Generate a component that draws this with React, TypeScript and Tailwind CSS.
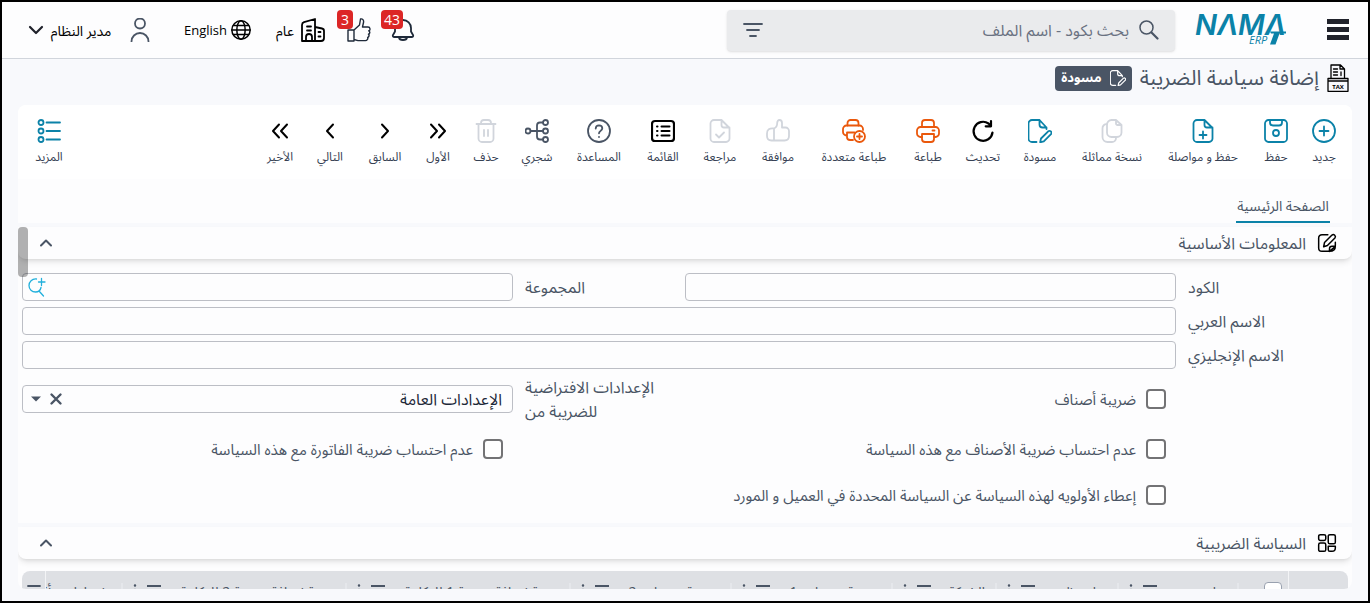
import type { ReactNode } from "react";

const stroke = {
  fill: "none",
  stroke: "currentColor",
  strokeWidth: 1.8,
  strokeLinecap: "round",
  strokeLinejoin: "round",
} as const;

type IconProps = { children: ReactNode; className?: string; box?: string };

function Icon({ children, className = "size-6", box = "0 0 24 24" }: IconProps) {
  return (
    <svg viewBox={box} className={`shrink-0 ${className}`} aria-hidden="true" {...stroke}>
      {children}
    </svg>
  );
}

const icons = {
  add: (
    <>
      <circle cx="12" cy="12" r="11" />
      <path d="M12 7.5v9M7.5 12h9" />
    </>
  ),
  save: (
    <>
      <rect x="1" y="1" width="22" height="22" rx="3.5" />
      <path d="M6 1v2.5A3 3 0 0 0 9 6.500h6a3 3 0 0 0 3-3V1" />
      <circle cx="12" cy="14" r="3" />
    </>
  ),
  saveNew: (
    <>
      <path d="M13.500 1H6a3.500 3.500 0 0 0-3.500 3.500v15A3.500 3.500 0 0 0 6 23h12a3.500 3.500 0 0 0 3.500-3.500V9zM13.500 1v5A2.500 2.500 0 0 0 16 8.500h5.500" />
      <path d="M12 12.500v7M8.500 16h7" />
    </>
  ),
  copy: (
    <>
      <path d="M16 1h-4.500A4.500 4.500 0 0 0 7 5.500v8a4.500 4.500 0 0 0 4.500 4.500H17a4.500 4.500 0 0 0 4.500-4.500V6zM16 1v3.500A1.500 1.500 0 0 0 17.500 6h4" />
      <path d="M7 5.200A4 4 0 0 0 2.500 9.500V18A5 5 0 0 0 7.500 23H12a4 4 0 0 0 4-4" />
    </>
  ),
  draft: (
    <>
      <path d="M8.500 23H4a3.500 3.500 0 0 1-3.500-3.500v-15A3.500 3.500 0 0 1 4 1h7.500l7 7.500V10M11.500 1v4.500A3 3 0 0 0 14.500 8.500h4" />
      <path d="M13 19.500l7.200-7.200a2 2 0 0 1 2.800 2.800L15.800 22.300l-3.600 1z" />
    </>
  ),
  refresh: (
    <path strokeWidth="2.200" d="M21.500 13.500A9.500 9.500 0 1 1 17.500 4.500L20 7M20 2v5.300h-5.300" />
  ),
  print: (
    <>
      <path d="M6 8V4a3 3 0 0 1 3-3h6a3 3 0 0 1 3 3v4" />
      <path d="M6 18H4.500A3.500 3.500 0 0 1 1 14.500v-3A3.500 3.500 0 0 1 4.500 8h15a3.500 3.500 0 0 1 3.500 3.500v3a3.500 3.500 0 0 1-3.500 3.500H18M16.500 11.500h2" />
      <path d="M6 15h12v5a3 3 0 0 1-3 3H9a3 3 0 0 1-3-3z" />
    </>
  ),
  printMany: (
    <>
      <path d="M5.500 6.500V4a3 3 0 0 1 3-3h5a3 3 0 0 1 3 3v2.500" />
      <path d="M4.500 16.500A3.500 3.500 0 0 1 1 13v-3a3.500 3.500 0 0 1 3.500-3.500h13a3.500 3.500 0 0 1 3.500 3.500v1M11 21H8a3 3 0 0 1-3-3v-4.500h7.500" />
      <circle cx="17.500" cy="17.500" r="5.500" />
      <path d="M17.500 15v5M15 17.500h5" />
    </>
  ),
  approve: (
    <path d="M8 10v11.500M1 14.500C1 10.500 3.500 9 8 9.500c3-1.200 3.200-3.500 3.200-5.500 0-2 1-3 2.200-3 1.600 0 2.600 1.200 2.600 3v4.500h3.500A3.500 3.500 0 0 1 23 12v5c0 3-1.500 4.500-4.500 4.500H5.500C2.500 21.500 1 20 1 17z" />
  ),
  review: (
    <>
      <path d="M13.500 1H6a3.500 3.500 0 0 0-3.500 3.500v15A3.500 3.500 0 0 0 6 23h12a3.500 3.500 0 0 0 3.500-3.500V9zM13.500 1v5A2.500 2.500 0 0 0 16 8.500h5.500" />
      <path d="M8 15.500l3 3 5-5" />
    </>
  ),
  list: (
    <>
      <rect x="1" y="2" width="22" height="20" rx="3" strokeWidth="2.200" />
      <path strokeWidth="2" d="M10.500 7.500h8M10.500 12h8M10.500 16.500h8M6 7.500h.5M6 12h.5M6 16.500h.5" />
    </>
  ),
  help: (
    <>
      <circle cx="12" cy="12" r="11" />
      <path d="M8.700 9.500A3.400 3.400 0 0 1 12 6.300c1.900 0 3.300 1.200 3.300 3 0 2.500-3.300 2.600-3.300 5M12 17.800v.2" />
    </>
  ),
  tree: (
    <>
      <circle cx="3" cy="12" r="2.500" />
      <circle cx="20.500" cy="3.500" r="2.500" />
      <circle cx="20.500" cy="12" r="2.500" />
      <circle cx="20.500" cy="20.500" r="2.500" />
      <path d="M5.500 12H18M18 3.500h-3A3 3 0 0 0 12 6.500v11a3 3 0 0 0 3 3h3" />
    </>
  ),
  trash: (
    <path d="M2.500 5h19M7 5V4a3 3 0 0 1 3-3h4a3 3 0 0 1 3 3v1M4.500 5v14.500A3.500 3.500 0 0 0 8 23h8a3.500 3.500 0 0 0 3.500-3.500V5M10 11v6M14 11v6" />
  ),
  first: <path strokeWidth="2" d="M5 5.500l6 6.500-6 6.500M13 5.500l6 6.500-6 6.500" />,
  previous: <path strokeWidth="2" d="M9 5.500l6 6.500-6 6.500" />,
  next: <path strokeWidth="2" d="M15 5.500L9 12l6 6.500" />,
  last: <path strokeWidth="2" d="M11 5.500L5 12l6 6.500M19 5.500L13 12l6 6.500" />,
  more: (
    <>
      <circle cx="4" cy="3.500" r="2.500" />
      <circle cx="4" cy="12" r="2.500" />
      <circle cx="4" cy="20.500" r="2.500" />
      <path d="M9.500 3.500H23M9.500 12H23M9.500 20.500H23" />
    </>
  ),
};

type Tool = { label: string; icon: ReactNode; width: string; color: string };

const tools: Tool[] = [
  { label: "جديد", icon: icons.add, width: "w-6", color: "text-[#0b82a8]" },
  { label: "حفظ", icon: icons.save, width: "w-6", color: "text-[#0b82a8]" },
  { label: "حفظ و مواصلة", icon: icons.saveNew, width: "w-[74px]", color: "text-[#0b82a8]" },
  { label: "نسخة مماثلة", icon: icons.copy, width: "w-[60px]", color: "text-gray-300" },
  { label: "مسودة", icon: icons.draft, width: "w-9", color: "text-[#0b82a8]" },
  { label: "تحديث", icon: icons.refresh, width: "w-[30px]", color: "text-black" },
  { label: "طباعة", icon: icons.print, width: "w-8", color: "text-[#ea580c]" },
  { label: "طباعة متعددة", icon: icons.printMany, width: "w-[68px]", color: "text-[#ea580c]" },
  { label: "موافقة", icon: icons.approve, width: "w-9", color: "text-gray-300" },
  { label: "مراجعة", icon: icons.review, width: "w-8", color: "text-gray-300" },
  { label: "القائمة", icon: icons.list, width: "w-[34px]", color: "text-black" },
  { label: "المساعدة", icon: icons.help, width: "w-[46px]", color: "text-gray-600" },
  { label: "شجري", icon: icons.tree, width: "w-[30px]", color: "text-gray-600" },
  { label: "حذف", icon: icons.trash, width: "w-6", color: "text-gray-300" },
  { label: "الأول", icon: icons.first, width: "w-6", color: "text-black" },
  { label: "السابق", icon: icons.previous, width: "w-[34px]", color: "text-black" },
  { label: "التالي", icon: icons.next, width: "w-7", color: "text-black" },
  { label: "الأخير", icon: icons.last, width: "w-6", color: "text-black" },
];

function ToolButton({ label, icon, width, color }: Tool) {
  return (
    <button type="button" className={`flex shrink-0 flex-col items-center gap-0.5 ${width}`}>
      <Icon className={`size-6 ${color}`}>{icon}</Icon>
      <span className="text-[12px] leading-6 whitespace-nowrap text-gray-700">{label}</span>
    </button>
  );
}

function Logo() {
  return (
    <svg viewBox="0 0 94 36" className="h-9 w-[94px] shrink-0 overflow-visible text-[#0b82a8]" fill="currentColor" role="img" aria-label="NAMA ERP">
      <text x="0" y="25" direction="ltr" fontFamily="Inter, sans-serif" fontStyle="italic" fontWeight="600" fontSize="29">
        NΛMΛ
      </text>
      <path d="M75 21.500h16v2H76zM79 23.500h5.500L80.500 34.500H75z" />
      <text x="54" y="34" direction="ltr" fontFamily="'Open Sans', sans-serif" fontStyle="italic" fontSize="11">
        ERP
      </text>
    </svg>
  );
}

function Header() {
  return (
    <header className="flex h-[57px] shrink-0 items-center border-b border-gray-300 bg-[#fdfdfe] pr-[19px] pl-[26px]">
      <button type="button" aria-label="القائمة الرئيسية" className="flex w-[22px] flex-col gap-[3px] pb-0.5">
        <span className="h-[5px] bg-[#20222b]" />
        <span className="h-[5px] bg-[#20222b]" />
        <span className="h-[5px] bg-[#20222b]" />
      </button>
      <a href="#home" className="mr-[38px] pb-1">
        <Logo />
      </a>
      <div className="mr-5 flex h-[41px] w-[448px] items-center rounded bg-[#eaebed] px-4 shadow-sm">
        <label htmlFor="search" className="text-gray-600">
          <Icon className="size-5" box="0 0 20 20">
            <circle cx="7.500" cy="7.500" r="6.500" strokeWidth="1.500" />
            <path d="M12.500 12.500L18.500 18.500" strokeWidth="2.200" />
          </Icon>
        </label>
        <input
          id="search"
          aria-label="بحث"
          placeholder="بحث بكود - اسم الملف"
          className="mr-2.5 h-8 min-w-0 flex-1 bg-transparent text-[16px] outline-none placeholder:text-gray-500"
        />
        <button type="button" aria-label="تصفية" className="text-gray-600">
          <Icon className="size-5" box="0 0 20 20">
            <path d="M1 4h18M4 10h12M7 16h6" />
          </Icon>
        </button>
      </div>
      <div className="flex-1" />
      <div className="flex items-center text-[14px] text-black">
        <button type="button" aria-label="الإشعارات" className="relative text-gray-800">
          <Icon className="size-6">
            <path d="M12 2a8 8 0 0 0-8 8v3.500L2 17c-.6 1.300 0 2 1.500 2h17c1.500 0 2.100-.7 1.500-2l-2-3.500V10a8 8 0 0 0-8-8zM8 19.500c.5 3.300 7.500 3.300 8 0" />
          </Icon>
          <span className="absolute -top-2 right-3 rounded bg-[#dc2626] px-[3px] text-[14px] leading-[19px] text-white">43</span>
        </button>
        <button type="button" aria-label="الموافقات" className="relative mr-5 text-gray-800">
          <Icon className="size-6">
            <path strokeWidth="1.400" d="M1 12h6v11H1zM7 12l5.500-5L13.500 1c2-.5 3.500 1 3 3.500L15.500 9H21c2.500 0 2.500 3.500.8 3.800 1.500.8 1.200 3-.3 3.400 1 .9.500 2.800-.8 3.200.5 1.800-.8 3.200-2.200 3.200H11L7 21.500" />
          </Icon>
          <span className="absolute -top-2 right-[18px] rounded bg-[#dc2626] px-1 text-[14px] leading-[19px] text-white">3</span>
        </button>
        <button type="button" className="mr-[22px] flex items-center gap-1.5">
          <Icon className="size-6">
            <path d="M1 23V7a3 3 0 0 1 2-2.800L14 1v22zM14 9l7 1.500a2.500 2.500 0 0 1 2 2.500v7a3 3 0 0 1-3 3h-6M5 23v-4a3 3 0 0 1 6 0v4M6 8.500h4M6 12.500h4M17.500 14h2M17.500 18.500h2" />
          </Icon>
          <span className="w-5 whitespace-nowrap">عام</span>
        </button>
        <button type="button" className="mr-6 flex items-center gap-1">
          <Icon className="size-5">
            <circle cx="12" cy="12" r="11" />
            <ellipse cx="12" cy="12" rx="5" ry="11" />
            <path d="M1 12h22M3 6.500h18M3 17.500h18" />
          </Icon>
          <span className="text-[13px] leading-6">English</span>
        </button>
        <button type="button" className="mr-8 flex items-center">
          <Icon className="size-6 text-gray-600">
            <circle cx="12" cy="5.500" r="5" />
            <path d="M3.500 23.500a8.500 8.500 0 0 1 17 0" />
          </Icon>
          <span className="mr-3.5 w-[66px] whitespace-nowrap">مدير النظام</span>
          <Icon className="mr-1 size-4 text-[#20222b]" box="0 0 16 16">
            <path strokeWidth="2.200" d="M2 5l6 6 6-6" />
          </Icon>
        </button>
      </div>
    </header>
  );
}

function SectionHeader({ title, children }: { title: string; children: ReactNode }) {
  return (
    <h2 className="border-t-4 border-[#f8f9fc]">
      <button type="button" className="flex h-8 w-full items-center rounded-b-lg bg-[#fdfdfe] pr-[15px] pl-5 text-gray-600 shadow-md">
        <Icon className="size-5 text-black">{children}</Icon>
        <span className="mr-[11px] text-[16px]">{title}</span>
        <Icon className="mr-auto size-4" box="0 0 16 16">
          <path strokeWidth="2" d="M3 10.500l5-5 5 5" />
        </Icon>
      </button>
    </h2>
  );
}

const inputClass = "h-7 w-full rounded border border-[#bcbec5] bg-transparent px-2.5 text-[16px] text-gray-800 outline-none";

function Field({ id, label, children, wide = false }: { id: string; label: string; children: ReactNode; wide?: boolean }) {
  return (
    <div className={wide ? "col-span-2 flex items-center" : "flex items-center"}>
      <label htmlFor={id} className="w-[172px] shrink-0 pr-4 pl-3 text-left text-[16px] leading-6 text-gray-600">
        {label}
      </label>
      <div className="relative min-w-0 flex-1">{children}</div>
    </div>
  );
}

function Check({ id, label }: { id: string; label: string }) {
  return (
    <div className="flex items-center gap-2.5 pr-[182px]">
      <input id={id} type="checkbox" className="size-5 shrink-0 appearance-none rounded border-2 border-[#737375] bg-white" />
      <label htmlFor={id} className="text-[15px] whitespace-nowrap text-gray-600">{label}</label>
    </div>
  );
}

const columns = [
  { title: "تطبق من", width: "w-[120px]" },
  { title: "تطبق إلى", width: "w-[122px]" },
  { title: "الشركة", width: "w-[104px]" },
  { title: "ضريبة مبيعات 1", width: "w-[161px]" },
  { title: "ضريبة مبيعات 2", width: "w-[161px]" },
  { title: "نسبة إضافة ضريبة 1 للتكلفة", width: "w-[224px]" },
  { title: "نسبة إضافة ضريبة 2 للتكلفة", width: "w-[224px]" },
];

function PolicyTable() {
  return (
    <table className="w-full table-fixed border-separate border-spacing-0 overflow-hidden rounded-t-lg bg-[#dee0e4] text-[14px] text-gray-600">
      <thead>
        <tr className="h-10">
          <th className="w-[60px] border-l border-gray-100" />
          <th className="w-[49px] pr-1.5 text-right">
            <input type="checkbox" aria-label="تحديد الكل" className="block size-[18px] appearance-none rounded border border-gray-400 bg-white" />
          </th>
          {columns.map((column) => (
            <th key={column.title} className={`p-0 font-normal ${column.width}`}>
              <div className="flex items-center gap-2.5 pl-2.5">
                <span className="h-4 w-0.5 shrink-0 bg-gray-200" />
                <span className="min-w-0 flex-1 text-right whitespace-nowrap">{column.title}</span>
                <Icon className="size-3.5" box="0 0 14 14">
                  <path d="M0 2h14M3 6h8M5 10h4" />
                </Icon>
                <Icon className="h-3.5 w-1" box="0 0 4 14">
                  <path strokeWidth="2.500" d="M2 1.500v.1M2 6v.1M2 10.500v.1" />
                </Icon>
              </div>
            </th>
          ))}
          <th className="w-[78px] overflow-hidden border-l border-gray-100 p-0 font-normal whitespace-nowrap">
            <div className="flex items-center">
              <span className="h-4 w-0.5 shrink-0 bg-gray-200" />
              <span className="mr-4">إعدادات تأثير</span>
            </div>
          </th>
          <th className="p-0">
            <Icon className="mr-1 size-3.5" box="0 0 14 14">
              <path d="M1 2h12M1 6h12M1 10h12" />
            </Icon>
          </th>
        </tr>
      </thead>
    </table>
  );
}

export default function App() {
  return (
    <div
      dir="rtl"
      lang="ar"
      className="flex h-screen flex-col overflow-hidden border-2 border-black bg-[#f8f9fc] font-['Open_Sans','Noto_Sans_Arabic','DejaVu_Sans',sans-serif]"
    >
      <Header />
      <main className="flex min-h-0 flex-1 flex-col px-4 pb-3">
        <div className="flex h-[46px] shrink-0 items-center px-[3px] pb-2">
          <Icon className="h-7 w-[22px] text-black" box="0 0 22 28">
            <path strokeWidth="1.300" d="M1 17h20v10.300H1zM1 17v-2.500h3M21 17v-2.500h-3M4 14.500V1h9.500L17.500 5v9.500M13 1v4h4.500M4 14.500h13.500M6.500 5h4M6.500 8h4M6.500 11h4M14 8v3.500" />
            <text x="11" y="24.500" textAnchor="middle" fill="currentColor" stroke="none" fontSize="6" fontWeight="700" direction="ltr">TAX</text>
          </Icon>
          <h1 className="mr-2 text-[21px] whitespace-nowrap text-gray-600">إضافة سياسة الضريبة</h1>
          <span className="mr-2 flex h-[25px] items-center gap-2 rounded bg-gray-600 px-1.5 text-[13px] font-bold text-white">
            <Icon className="size-4">{icons.draft}</Icon>
            مسودة
          </span>
        </div>
        <div className="relative flex min-h-0 flex-1 flex-col overflow-hidden rounded-lg bg-[#fdfdfe]">
          <div className="flex h-[74px] shrink-0 items-start gap-6 bg-white pt-3.5 pr-4 pl-4">
            {tools.map((tool) => (
              <ToolButton key={tool.label} {...tool} />
            ))}
            <div className="flex-1" />
            <ToolButton label="المزيد" icon={icons.more} width="w-[30px]" color="text-[#0b82a8]" />
          </div>
          <nav className="flex h-11 shrink-0 items-end pr-[22px]">
            <a href="#main" className="flex h-8 w-[94px] justify-center border-b-2 border-[#0b82a8] text-[14px] leading-[30px] whitespace-nowrap text-gray-600">
              الصفحة الرئيسية
            </a>
          </nav>
          <div className="relative min-h-0 flex-1 overflow-hidden">
            <SectionHeader title="المعلومات الأساسية">
              <path d="M13 2H6a4 4 0 0 0-4 4v12a4 4 0 0 0 4 4h8M22 11v4M8 16.500l1-5L18 2.500a2.500 2.500 0 0 1 3.500 3.500l-9 9zM15 22v-3a3 3 0 0 1 3-3h4zM15 22c4 0 7-2 7-6" />
            </SectionHeader>
            <form className="grid grid-cols-2 gap-y-1.5 px-1 pt-3.5 pb-2">
              <Field id="code" label="الكود">
                <input id="code" className={inputClass} />
              </Field>
              <Field id="group" label="المجموعة">
                <input id="group" className={inputClass} />
                <button type="button" aria-label="بحث عن مجموعة" className="absolute top-1 left-1.5 text-[#22b0dc]">
                  <Icon className="size-5" box="0 0 20 20">
                    <path strokeWidth="1.300" d="M8.500 2C4 1.500 1 5 1 8.500c0 4 3 6.500 6.500 6.500 3 0 5-2 5.500-4.500M11 14l4.500 5M13.500 1.500v7M10.500 5h6.500" />
                  </Icon>
                </button>
              </Field>
              <Field id="name-ar" label="الاسم العربي" wide>
                <input id="name-ar" className={inputClass} />
              </Field>
              <Field id="name-en" label="الاسم الإنجليزي" wide>
                <input id="name-en" className={inputClass} />
              </Field>
              <Check id="items-tax" label="ضريبة أصناف" />
              <Field id="defaults" label="الإعدادات الافتراضية للضريبة من">
                <select id="defaults" className={`${inputClass} appearance-none`}>
                  <option>الإعدادات العامة</option>
                </select>
                <div className="absolute top-1.5 left-2 flex items-center gap-1.5 text-gray-600">
                  <button type="button" aria-label="مسح">
                    <Icon className="size-4" box="0 0 16 16">
                      <path strokeWidth="2.400" d="M3.500 3.500l9 9M12.500 3.500l-9 9" />
                    </Icon>
                  </button>
                  <svg viewBox="0 0 12 12" className="size-3" fill="currentColor" aria-hidden="true">
                    <path d="M1 3.500h10L6 8.500z" />
                  </svg>
                </div>
              </Field>
              <div className="col-span-2 grid h-10 grid-cols-2 items-center">
                <Check id="skip-items" label="عدم احتساب ضريبة الأصناف مع هذه السياسة" />
                <Check id="skip-invoice" label="عدم احتساب ضريبة الفاتورة مع هذه السياسة" />
              </div>
              <div className="col-span-2 grid h-10 grid-cols-2 items-center">
                <Check id="priority" label="إعطاء الأولويه لهذه السياسة عن السياسة المحددة في العميل و المورد" />
              </div>
            </form>
            <SectionHeader title="السياسة الضريبية">
              <rect x="2" y="2" width="8.500" height="7" rx="2" />
              <rect x="13.500" y="2" width="8.500" height="11" rx="2" />
              <rect x="2" y="12" width="8.500" height="10" rx="2" />
              <path d="M13.500 16h8.500v2a4 4 0 0 1-4 4h-2.500a2 2 0 0 1-2-2z" />
            </SectionHeader>
            <div className="px-1 pt-3">
              <PolicyTable />
            </div>
            <div className="absolute top-1 left-0 h-[50px] w-2.5 rounded-sm bg-black/30" />
          </div>
        </div>
      </main>
    </div>
  );
}
